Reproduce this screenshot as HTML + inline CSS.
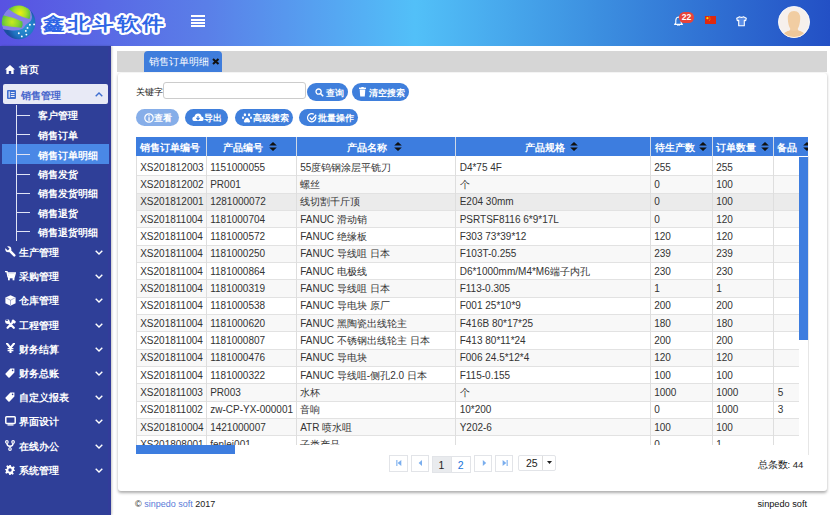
<!DOCTYPE html>
<html><head><meta charset="utf-8">
<style>
*{margin:0;padding:0;box-sizing:border-box}
html,body{width:830px;height:515px;overflow:hidden;background:#fff;font-family:"Liberation Sans",sans-serif;font-size:10px;color:#222}
.abs{position:absolute}
#hdr{position:absolute;left:0;top:0;width:830px;height:46px;background:linear-gradient(90deg,#5852e2 0%,#5a7fe8 25%,#52c0f8 50%,#3c8fe0 72%,#2350c5 100%)}
#side{position:absolute;left:0;top:46px;width:111px;height:469px;background:#2f3f98;box-shadow:1px 0 2px rgba(0,0,0,.22);border-right:3px solid #323c9a}
.mi{position:absolute;left:0;width:111px;height:20px;color:#fff;font-size:10px;line-height:20px;font-weight:bold}
.mi .t{position:absolute;left:19px;top:0}
.mi .ic{position:absolute;left:5px;top:5px;width:10px;height:10px}
.mi .ch{position:absolute;left:95px;top:7px}
.lbl{margin-top:1px;font-size:9.6px;font-weight:bold;color:#fff;line-height:12px;white-space:nowrap}
.sub{position:absolute;left:38px;color:#fff;font-size:10px;font-weight:bold;line-height:19px;height:19px}
#card{position:absolute;left:117.5px;top:73px;width:709px;height:417.5px;background:#fff;border-radius:3px;box-shadow:0 1.5px 3px rgba(0,0,0,.32)}
#tabbar{position:absolute;left:117px;top:51px;width:710px;height:21px;background:#d6d6d6}
#tab{position:absolute;left:144px;top:51px;width:78px;height:21px;background:#3f7ddc;border-radius:4px 4px 0 0;color:#fff;font-size:10px;line-height:21px}
.btn{position:absolute;height:18px;border-radius:9px;background:#3f7fdc;color:#fff;font-size:8.7px;line-height:18px;font-weight:bold;text-align:center}
.cell{font-size:10px;line-height:17.4px;color:#333;white-space:nowrap}
.hcell{font-size:9.5px;line-height:19px;color:#fff;font-weight:bold;white-space:nowrap}
.pb{border:1px solid #e2e4e8;background:#fff}
table{border-collapse:collapse;table-layout:fixed}
#tbl{position:absolute;left:136px;top:137px}
#tbl th{background:#3f7fdc;color:#fff;font-weight:bold;height:19px;font-size:10px;border-right:1px solid #d8e4f6;text-align:center;white-space:nowrap;overflow:hidden}
#tbl td{height:17.5px;font-size:10px;border-right:1px solid #ddd;border-bottom:1px solid #e2e2e2;padding-left:5px;white-space:nowrap;overflow:hidden;color:#222}
</style></head><body>
<div id="hdr">
<svg class="abs" style="left:0;top:0" width="40" height="42" viewBox="0 0 40 42">
<defs>
<radialGradient id="gg1" cx="20" cy="13" r="11" gradientUnits="userSpaceOnUse"><stop offset="0" stop-color="#f0f010"/><stop offset="0.55" stop-color="#a8e028"/><stop offset="1" stop-color="#58c040"/></radialGradient>
<radialGradient id="gg2" cx="12" cy="22" r="11" gradientUnits="userSpaceOnUse"><stop offset="0" stop-color="#c8ea20"/><stop offset="0.6" stop-color="#88d430"/><stop offset="1" stop-color="#50b848"/></radialGradient>
<radialGradient id="bb" cx="24" cy="26" r="17" gradientUnits="userSpaceOnUse"><stop offset="0" stop-color="#2a9ad8"/><stop offset="0.7" stop-color="#1f72c0"/><stop offset="1" stop-color="#1a4fa0"/></radialGradient>
<clipPath id="cc"><circle cx="18.6" cy="22.4" r="16.8"/></clipPath>
</defs>
<circle cx="18.6" cy="22.4" r="16.8" fill="url(#bb)"/>
<g clip-path="url(#cc)">
<path d="M0 4 L24 4 Q31.5 8 32 17 Q31.5 21 29.5 22 Q26 24 23 28.5 Q19 31 12 30.5 Q5 30 0 28.5 Z" fill="#8680e8"/>
<path d="M7.5 8.2 Q12 5 20 5 Q28.5 5.5 30 11.5 Q30.8 17 29.3 19 Q18 16.5 7.5 8.2Z" fill="url(#gg1)"/>
<path d="M1 14.8 Q12 17 22.3 21.5 Q23.5 25 21.5 27.8 Q12 26.8 1 25.2 Z" fill="url(#gg2)"/>
</g>
<g fill="#fff"><circle cx="29.9" cy="24.8" r="0.95"/><circle cx="34.1" cy="24.4" r="0.95"/><circle cx="27.5" cy="27.9" r="0.95"/><circle cx="25.8" cy="30.9" r="0.95"/><circle cx="26.4" cy="34.6" r="0.95"/><circle cx="18.8" cy="33.3" r="0.95"/><circle cx="21.8" cy="36.4" r="0.95"/></g>
</svg>
<div class="abs" style="left:42.5px;top:11px;font-size:18px;line-height:26px;font-weight:700;color:#2f66e6;letter-spacing:2.6px;-webkit-text-stroke:0px #2f66e6;text-shadow:2.00px 0.00px 0 #fff,1.85px 0.77px 0 #fff,1.41px 1.41px 0 #fff,0.77px 1.85px 0 #fff,0.00px 2.00px 0 #fff,-0.77px 1.85px 0 #fff,-1.41px 1.41px 0 #fff,-1.85px 0.77px 0 #fff,-2.00px 0.00px 0 #fff,-1.85px -0.77px 0 #fff,-1.41px -1.41px 0 #fff,-0.77px -1.85px 0 #fff,-0.00px -2.00px 0 #fff,0.77px -1.85px 0 #fff,1.41px -1.41px 0 #fff,1.85px -0.77px 0 #fff,1.11px 0.46px 0 #fff,0.46px 1.11px 0 #fff,-0.46px 1.11px 0 #fff,-1.11px 0.46px 0 #fff,-1.11px -0.46px 0 #fff,-0.46px -1.11px 0 #fff,0.46px -1.11px 0 #fff,1.11px -0.46px 0 #fff;white-space:nowrap;transform:scaleX(1.2);transform-origin:0 0">鑫北斗软件</div>
<div class="abs" style="left:191px;top:15.3px;width:14px;height:1.9px;background:#fff"></div>
<div class="abs" style="left:191px;top:18.7px;width:14px;height:1.9px;background:#fff"></div>
<div class="abs" style="left:191px;top:22px;width:14px;height:1.9px;background:#fff"></div>
<div class="abs" style="left:191px;top:25.2px;width:14px;height:1.9px;background:#fff"></div>
<svg class="abs" style="left:673.5px;top:15.5px" width="9" height="10.5" viewBox="0 0 9 10.5"><path d="M4.5 1 Q1.8 1.3 1.8 4.5 L1.8 7 L0.6 8.4 L8.4 8.4 L7.2 7 L7.2 4.5 Q7.2 1.3 4.5 1Z" stroke="#fff" stroke-width="1.1" fill="none" stroke-linejoin="round"/><path d="M3.3 9.3 Q4.5 10.4 5.7 9.3" stroke="#fff" stroke-width="1" fill="none"/></svg>
<div class="abs" style="left:679px;top:12.2px;width:14.8px;height:10.5px;border-radius:5.2px;background:#e8443a;color:#fff;font-size:8.5px;font-weight:bold;line-height:10.5px;text-align:center">22</div>
<svg class="abs" style="left:704.5px;top:16.4px" width="11.5" height="8" viewBox="0 0 11.5 8"><rect width="11.5" height="8" fill="#de2910"/><circle cx="2.4" cy="2.2" r="1.1" fill="#ffde00"/><circle cx="4.4" cy="0.9" r="0.4" fill="#ffde00"/><circle cx="5" cy="2" r="0.4" fill="#ffde00"/><circle cx="5" cy="3.4" r="0.4" fill="#ffde00"/><circle cx="4.3" cy="4.4" r="0.4" fill="#ffde00"/></svg>
<svg class="abs" style="left:735.5px;top:16px" width="11" height="10.5" viewBox="0 0 11 10.5"><path d="M3.6 0.7 Q5.5 2 7.4 0.7 L10.3 2.2 L9.7 4.6 L8.3 4.3 L8.3 9.8 L2.7 9.8 L2.7 4.3 L1.3 4.6 L0.7 2.2Z" stroke="#fff" stroke-width="1.1" fill="#5b8ee6" stroke-linejoin="round"/></svg>
<svg class="abs" style="left:777.5px;top:6px" width="32" height="32" viewBox="0 0 32 32"><defs><clipPath id="av"><circle cx="16" cy="16" r="15.6"/></clipPath></defs><circle cx="16" cy="16" r="15.6" fill="#f6f0ec"/><g clip-path="url(#av)"><path d="M16 5 Q22.5 5 22.2 13 Q21.8 19.5 19.8 22.5 L20 24.5 Q26 26 30 32 L2 32 Q6 26 12 24.5 L12.2 22.5 Q10.2 19.5 9.8 13 Q9.5 5 16 5Z" fill="#f1cda2"/><path d="M2 32 Q6 25.5 12.5 24.3 Q16 25.5 19.5 24.3 Q26 25.5 30 32Z" fill="#eec89a"/></g><circle cx="16" cy="16" r="15.6" stroke="#fff" stroke-width="0.8" fill="none"/></svg>
</div>
<div id="side">
<svg class="abs" style="left:5px;top:19px" width="10" height="9" viewBox="0 0 10 9"><path d="M5 0 L10 4.6 L8.6 4.6 L8.6 9 L6.2 9 L6.2 6 L3.8 6 L3.8 9 L1.4 9 L1.4 4.6 L0 4.6 Z" fill="#fff"/></svg>
<div class="abs lbl" style="left:19px;top:17px">首页</div>
<div class="abs" style="left:3px;top:38px;width:105px;height:20px;background:#e8eaf6;border-radius:2px"></div>
<svg class="abs" style="left:7px;top:44px" width="9" height="9" viewBox="0 0 9 9"><rect x="0" y="0" width="9" height="9" rx="1" fill="#3f6fd0"/><rect x="1.6" y="1.3" width="1.2" height="6.4" fill="#e8eaf6"/><rect x="3.8" y="2" width="3.8" height="1" fill="#e8eaf6"/><rect x="3.8" y="4" width="3.8" height="1" fill="#e8eaf6"/><rect x="3.8" y="6" width="3.8" height="1" fill="#e8eaf6"/></svg>
<div class="abs lbl" style="left:20.5px;top:43px;color:#4866cc">销售管理</div>
<svg class="abs" style="left:95px;top:46px" width="8" height="5" viewBox="0 0 8 5"><path d="M0.7 4.3 L4 1 L7.3 4.3" stroke="#3f6fd0" stroke-width="1.4" fill="none"/></svg>
<div class="abs" style="left:2px;top:98px;width:107px;height:20px;background:#4a88e6"></div>
<div class="abs" style="left:16px;top:59px;width:1px;height:136px;background:#dfe3f5"></div>
<div class="abs" style="left:16px;top:68.5px;width:14px;height:1px;background:#dfe3f5"></div>
<div class="abs lbl" style="left:38px;top:63px">客户管理</div>
<div class="abs" style="left:16px;top:88.1px;width:14px;height:1px;background:#dfe3f5"></div>
<div class="abs lbl" style="left:38px;top:82.6px">销售订单</div>
<div class="abs" style="left:16px;top:108.0px;width:14px;height:1px;background:#dfe3f5"></div>
<div class="abs lbl" style="left:38px;top:102.5px">销售订单明细</div>
<div class="abs" style="left:16px;top:127.69999999999999px;width:14px;height:1px;background:#dfe3f5"></div>
<div class="abs lbl" style="left:38px;top:122.19999999999999px">销售发货</div>
<div class="abs" style="left:16px;top:146.5px;width:14px;height:1px;background:#dfe3f5"></div>
<div class="abs lbl" style="left:38px;top:141px">销售发货明细</div>
<div class="abs" style="left:16px;top:166.0px;width:14px;height:1px;background:#dfe3f5"></div>
<div class="abs lbl" style="left:38px;top:160.5px">销售退货</div>
<div class="abs" style="left:16px;top:185.3px;width:14px;height:1px;background:#dfe3f5"></div>
<div class="abs lbl" style="left:38px;top:179.8px">销售退货明细</div>
<div class="abs lbl" style="left:19px;top:200.0px">生产管理</div>
<svg class="abs" style="left:95px;top:204.0px" width="8" height="5" viewBox="0 0 8 5"><path d="M0.7 0.7 L4 4 L7.3 0.7" stroke="#fff" stroke-width="1.4" fill="none"/></svg>
<div class="abs" style="left:5px;top:199.8px;line-height:0"><svg width="11" height="11" viewBox="0 0 11 11"><path d="M4 4 L9.3 9.3" stroke="#fff" stroke-width="2.5" stroke-linecap="round"/><circle cx="3.3" cy="3.3" r="3" fill="#fff"/><path d="M1.2 -0.6 L4.6 2.8 L2.8 4.6 L-0.6 1.2Z" fill="#2f3f98"/></svg></div>
<div class="abs lbl" style="left:19px;top:224.2px">采购管理</div>
<svg class="abs" style="left:95px;top:228.2px" width="8" height="5" viewBox="0 0 8 5"><path d="M0.7 0.7 L4 4 L7.3 0.7" stroke="#fff" stroke-width="1.4" fill="none"/></svg>
<div class="abs" style="left:5px;top:224.6px;line-height:0"><svg width="11" height="10" viewBox="0 0 11 10"><path d="M0 0.5 L2 0.5 L3 5.8 L9.2 5.8 L10.3 2 L2.6 2" stroke="#fff" stroke-width="1.4" fill="none"/><path d="M3 2.6 L9.8 2.6 L8.9 5.2 L3.4 5.2Z" fill="#fff"/><rect x="3" y="6" width="6.5" height="1.3" fill="#fff"/><rect x="3" y="7" width="1.8" height="2.3" fill="#fff"/><rect x="7.6" y="7" width="1.8" height="2.3" fill="#fff"/></svg></div>
<div class="abs lbl" style="left:19px;top:248.4px">仓库管理</div>
<svg class="abs" style="left:95px;top:252.4px" width="8" height="5" viewBox="0 0 8 5"><path d="M0.7 0.7 L4 4 L7.3 0.7" stroke="#fff" stroke-width="1.4" fill="none"/></svg>
<div class="abs" style="left:5px;top:249.0px;line-height:0"><svg width="11" height="11" viewBox="0 0 11 11"><path d="M5.5 0.3 L10.6 2.6 L10.6 8.3 L5.5 10.7 L0.4 8.3 L0.4 2.6Z" fill="#fff"/><path d="M1.2 3 L5.5 5.2 L9.8 3 M5.5 5.2 L5.5 10" stroke="#2f3f98" stroke-width="0.7" fill="none" opacity=".6"/></svg></div>
<div class="abs lbl" style="left:19px;top:272.6px">工程管理</div>
<svg class="abs" style="left:95px;top:276.6px" width="8" height="5" viewBox="0 0 8 5"><path d="M0.7 0.7 L4 4 L7.3 0.7" stroke="#fff" stroke-width="1.4" fill="none"/></svg>
<div class="abs" style="left:5px;top:273.0px;line-height:0"><svg width="11" height="10" viewBox="0 0 11 10"><path d="M2.6 2.6 L8.8 8.8 M8.6 2.4 L2.6 8.8" stroke="#fff" stroke-width="2.2" stroke-linecap="round"/><circle cx="2.4" cy="2.6" r="2.3" fill="#fff"/><circle cx="2" cy="1.2" r="0.9" fill="#2f3f98"/><rect x="6.6" y="1.2" width="4.2" height="2.6" transform="rotate(40 8.7 2.5)" fill="#fff"/></svg></div>
<div class="abs lbl" style="left:19px;top:296.8px">财务结算</div>
<svg class="abs" style="left:95px;top:300.8px" width="8" height="5" viewBox="0 0 8 5"><path d="M0.7 0.7 L4 4 L7.3 0.7" stroke="#fff" stroke-width="1.4" fill="none"/></svg>
<div class="abs" style="left:6px;top:297.0px;line-height:0"><svg width="9" height="10" viewBox="0 0 9 10"><path d="M1 0.5 L4.5 4.8 L8 0.5" stroke="#fff" stroke-width="2.1" fill="none" stroke-linecap="square"/><path d="M4.5 4.5 L4.5 10" stroke="#fff" stroke-width="2"/><path d="M1.6 5.6 L7.4 5.6 M1.6 7.6 L7.4 7.6" stroke="#fff" stroke-width="1.2"/></svg></div>
<div class="abs lbl" style="left:19px;top:321.0px">财务总账</div>
<svg class="abs" style="left:95px;top:325.0px" width="8" height="5" viewBox="0 0 8 5"><path d="M0.7 0.7 L4 4 L7.3 0.7" stroke="#fff" stroke-width="1.4" fill="none"/></svg>
<div class="abs" style="left:5px;top:321.5px;line-height:0"><svg width="10" height="10" viewBox="0 0 10 10"><path d="M0.6 5.4 L5.4 0.6 L9.4 0.6 L9.4 4.6 L4.6 9.4 Q4 10 3.4 9.4 L0.6 6.6 Q0 6 0.6 5.4Z" fill="#fff"/><circle cx="7.6" cy="2.4" r="0.8" fill="#2f3f98"/></svg></div>
<div class="abs lbl" style="left:19px;top:345.2px">自定义报表</div>
<svg class="abs" style="left:95px;top:349.2px" width="8" height="5" viewBox="0 0 8 5"><path d="M0.7 0.7 L4 4 L7.3 0.7" stroke="#fff" stroke-width="1.4" fill="none"/></svg>
<div class="abs" style="left:5px;top:346.0px;line-height:0"><svg width="10" height="10" viewBox="0 0 10 10"><path d="M0.6 5.4 L5.4 0.6 L9.4 0.6 L9.4 4.6 L4.6 9.4 Q4 10 3.4 9.4 L0.6 6.6 Q0 6 0.6 5.4Z" fill="#fff"/><circle cx="7.6" cy="2.4" r="0.8" fill="#2f3f98"/></svg></div>
<div class="abs lbl" style="left:19px;top:369.4px">界面设计</div>
<svg class="abs" style="left:95px;top:373.4px" width="8" height="5" viewBox="0 0 8 5"><path d="M0.7 0.7 L4 4 L7.3 0.7" stroke="#fff" stroke-width="1.4" fill="none"/></svg>
<div class="abs" style="left:5px;top:370.3px;line-height:0"><svg width="11" height="10" viewBox="0 0 11 10"><rect x="0.8" y="0.8" width="9.4" height="6.6" rx="0.8" stroke="#fff" stroke-width="1.5" fill="none"/><rect x="2.5" y="8.3" width="6" height="1.3" fill="#fff"/></svg></div>
<div class="abs lbl" style="left:19px;top:393.6px">在线办公</div>
<svg class="abs" style="left:95px;top:397.6px" width="8" height="5" viewBox="0 0 8 5"><path d="M0.7 0.7 L4 4 L7.3 0.7" stroke="#fff" stroke-width="1.4" fill="none"/></svg>
<div class="abs" style="left:5px;top:393.8px;line-height:0"><svg width="10" height="11" viewBox="0 0 10 11"><circle cx="1.9" cy="1.9" r="1.3" stroke="#fff" stroke-width="1.1" fill="none"/><circle cx="8.1" cy="1.9" r="1.3" stroke="#fff" stroke-width="1.1" fill="none"/><circle cx="5" cy="9.1" r="1.3" stroke="#fff" stroke-width="1.1" fill="none"/><path d="M1.9 3.2 Q1.9 6 5 6.3 Q8.1 6 8.1 3.2 M5 6.3 L5 7.8" stroke="#fff" stroke-width="1.4" fill="none"/></svg></div>
<div class="abs lbl" style="left:19px;top:417.8px">系统管理</div>
<svg class="abs" style="left:95px;top:421.8px" width="8" height="5" viewBox="0 0 8 5"><path d="M0.7 0.7 L4 4 L7.3 0.7" stroke="#fff" stroke-width="1.4" fill="none"/></svg>
<div class="abs" style="left:5px;top:419.0px;line-height:0"><svg width="10" height="10" viewBox="0 0 10 10"><path d="M4.2 0 L5.8 0 L6.1 1.6 L7.3 2.1 L8.7 1.2 L9 1.5 L9.8 2.3 L8.9 3.7 L9.4 4.9 L10 5 L10 5.8 L8.4 6.1 L7.9 7.3 L8.8 8.7 L7.7 9.8 L6.3 8.9 L5.8 9.1 L5.8 10 L4.2 10 L3.9 8.4 L2.7 7.9 L1.3 8.8 L0.2 7.7 L1.1 6.3 L0.6 5.1 L0 5 L0 4.2 L1.6 3.9 L2.1 2.7 L1.2 1.3 L2.3 0.2 L3.7 1.1 L4.2 0.9 Z" fill="#fff"/><circle cx="5" cy="5" r="1.7" fill="#2f3f98"/></svg></div>
</div>
<div id="card"></div>
<div id="tabbar"></div>
<div id="tab"><span class="abs" style="left:5px;top:0;font-size:9.6px">销售订单明细</span><svg class="abs" style="left:68px;top:7px" width="7.5" height="7" viewBox="0 0 7.5 7"><path d="M1 1 L6.5 6 M6.5 1 L1 6" stroke="#111" stroke-width="2.1"/></svg></div>
<div class="abs" style="left:135.5px;top:86px;font-size:9px;line-height:12px;color:#222">关键字</div>
<div class="abs" style="left:162.5px;top:81.5px;width:143px;height:17px;border:1px solid #ccc;border-radius:3px;background:#fff"></div>
<div class="btn" style="left:306.5px;top:83.2px;width:41px;height:18px">
<svg class="abs" style="left:8.2px;top:4.5px" width="9" height="9" viewBox="0 0 9 9"><circle cx="3.6" cy="3.6" r="2.6" stroke="#fff" stroke-width="1.3" fill="none"/><path d="M5.5 5.5 L8.2 8.2" stroke="#fff" stroke-width="1.6"/></svg><span class="abs" style="left:19px;top:0.5px">查询</span></div>
<div class="btn" style="left:351.7px;top:83.2px;width:57.3px;height:18px">
<svg class="abs" style="left:7.5px;top:3.5px" width="7" height="10" viewBox="0 0 7 10"><rect x="0" y="0.6" width="7" height="1.4" fill="#fff"/><rect x="2.3" y="0" width="2.4" height="1" fill="#fff"/><path d="M0.7 2.6 L6.3 2.6 L5.8 9.6 L1.2 9.6Z" fill="#fff"/></svg><span class="abs" style="left:17px;top:0.5px">清空搜索</span></div>
<div class="btn" style="left:135.5px;top:108.5px;width:43px;height:17.5px;background:#86aee9">
<svg class="abs" style="left:8.2px;top:4px" width="10" height="10" viewBox="0 0 10 10"><circle cx="5" cy="5" r="4.2" stroke="#fff" stroke-width="1.2" fill="none"/><rect x="4.4" y="4.2" width="1.3" height="3.6" fill="#fff"/><circle cx="5" cy="2.8" r="0.75" fill="#fff"/></svg><span class="abs" style="left:18.8px;top:0.5px">查看</span></div>
<div class="btn" style="left:184.5px;top:108.5px;width:43.5px;height:17.5px">
<svg class="abs" style="left:7px;top:4.2px" width="12" height="8.6" viewBox="0 0 11 8"><path d="M2.6 7.6 Q0.2 7.6 0.2 5.4 Q0.2 3.4 2.3 3.2 Q2.8 0.4 5.6 0.4 Q8.4 0.4 8.8 3.2 Q10.8 3.5 10.8 5.5 Q10.8 7.6 8.5 7.6Z" fill="#fff"/><path d="M5.5 2.8 L5.5 6 M4 4.6 L5.5 6.2 L7 4.6" stroke="#3f7fdc" stroke-width="1.1" fill="none"/></svg><span class="abs" style="left:19.5px;top:0.5px">导出</span></div>
<div class="btn" style="left:234.5px;top:108.5px;width:58.5px;height:17.5px">
<svg class="abs" style="left:7.2px;top:4px" width="10" height="10" viewBox="0 0 10 10"><ellipse cx="2.9" cy="1.8" rx="1.2" ry="1.5" fill="#fff"/><ellipse cx="7.1" cy="1.8" rx="1.2" ry="1.5" fill="#fff"/><ellipse cx="1" cy="4.8" rx="1" ry="1.3" fill="#fff"/><ellipse cx="9" cy="4.8" rx="1" ry="1.3" fill="#fff"/><path d="M5 4.6 Q7.6 5.6 8.2 8.4 Q8 9.8 6.3 9.4 Q5 9 3.7 9.4 Q2 9.8 1.8 8.4 Q2.4 5.6 5 4.6Z" fill="#fff"/></svg><span class="abs" style="left:18.8px;top:0.5px">高级搜索</span></div>
<div class="btn" style="left:298.5px;top:108.5px;width:59px;height:17.5px">
<svg class="abs" style="left:8.5px;top:4px" width="10" height="10" viewBox="0 0 10 10"><path d="M8.6 3.6 A4.1 4.1 0 1 1 6.8 1.2" stroke="#fff" stroke-width="1.2" fill="none"/><path d="M2.8 4.6 L4.8 6.6 L9.2 1.8" stroke="#fff" stroke-width="1.4" fill="none"/></svg><span class="abs" style="left:19.5px;top:0.5px">批量操作</span></div>
<!--TBL-->
<div class="abs" style="left:136px;top:137px;width:672px;height:308px;overflow:hidden">
<div class="abs" style="left:0;top:22.07px;width:663px;height:16.33px;background:#fff"></div>
<div class="abs" style="left:0;top:38.40px;width:663px;height:1px;background:#e2e2e2"></div>
<div class="abs cell" style="left:4.2px;top:21.57px">XS201812003</div>
<div class="abs cell" style="left:74.2px;top:21.57px">1151000055</div>
<div class="abs cell" style="left:164.2px;top:21.57px">55度钨钢涂层平铣刀</div>
<div class="abs cell" style="left:323.7px;top:21.57px">D4*75 4F</div>
<div class="abs cell" style="left:518.2px;top:21.57px">255</div>
<div class="abs cell" style="left:580.2px;top:21.57px">255</div>
<div class="abs" style="left:0;top:39.40px;width:663px;height:16.33px;background:#f8f8f8"></div>
<div class="abs" style="left:0;top:55.73px;width:663px;height:1px;background:#e2e2e2"></div>
<div class="abs cell" style="left:4.2px;top:38.90px">XS201812002</div>
<div class="abs cell" style="left:74.2px;top:38.90px">PR001</div>
<div class="abs cell" style="left:164.2px;top:38.90px">螺丝</div>
<div class="abs cell" style="left:323.7px;top:38.90px">个</div>
<div class="abs cell" style="left:518.2px;top:38.90px">0</div>
<div class="abs cell" style="left:580.2px;top:38.90px">100</div>
<div class="abs" style="left:0;top:56.73px;width:663px;height:16.33px;background:#ebebeb"></div>
<div class="abs" style="left:0;top:73.06px;width:663px;height:1px;background:#e2e2e2"></div>
<div class="abs cell" style="left:4.2px;top:56.23px">XS201812001</div>
<div class="abs cell" style="left:74.2px;top:56.23px">1281000072</div>
<div class="abs cell" style="left:164.2px;top:56.23px">线切割千斤顶</div>
<div class="abs cell" style="left:323.7px;top:56.23px">E204 30mm</div>
<div class="abs cell" style="left:518.2px;top:56.23px">0</div>
<div class="abs cell" style="left:580.2px;top:56.23px">100</div>
<div class="abs" style="left:0;top:74.06px;width:663px;height:16.33px;background:#f8f8f8"></div>
<div class="abs" style="left:0;top:90.39px;width:663px;height:1px;background:#e2e2e2"></div>
<div class="abs cell" style="left:4.2px;top:73.56px">XS201811004</div>
<div class="abs cell" style="left:74.2px;top:73.56px">1181000704</div>
<div class="abs cell" style="left:164.2px;top:73.56px">FANUC 滑动销</div>
<div class="abs cell" style="left:323.7px;top:73.56px">PSRTSF8116 6*9*17L</div>
<div class="abs cell" style="left:518.2px;top:73.56px">0</div>
<div class="abs cell" style="left:580.2px;top:73.56px">120</div>
<div class="abs" style="left:0;top:91.39px;width:663px;height:16.33px;background:#fff"></div>
<div class="abs" style="left:0;top:107.72px;width:663px;height:1px;background:#e2e2e2"></div>
<div class="abs cell" style="left:4.2px;top:90.89px">XS201811004</div>
<div class="abs cell" style="left:74.2px;top:90.89px">1181000572</div>
<div class="abs cell" style="left:164.2px;top:90.89px">FANUC 绝缘板</div>
<div class="abs cell" style="left:323.7px;top:90.89px">F303 73*39*12</div>
<div class="abs cell" style="left:518.2px;top:90.89px">120</div>
<div class="abs cell" style="left:580.2px;top:90.89px">120</div>
<div class="abs" style="left:0;top:108.72px;width:663px;height:16.33px;background:#f8f8f8"></div>
<div class="abs" style="left:0;top:125.05px;width:663px;height:1px;background:#e2e2e2"></div>
<div class="abs cell" style="left:4.2px;top:108.22px">XS201811004</div>
<div class="abs cell" style="left:74.2px;top:108.22px">1181000250</div>
<div class="abs cell" style="left:164.2px;top:108.22px">FANUC 导线咀 日本</div>
<div class="abs cell" style="left:323.7px;top:108.22px">F103T-0.255</div>
<div class="abs cell" style="left:518.2px;top:108.22px">239</div>
<div class="abs cell" style="left:580.2px;top:108.22px">239</div>
<div class="abs" style="left:0;top:126.05px;width:663px;height:16.33px;background:#fff"></div>
<div class="abs" style="left:0;top:142.38px;width:663px;height:1px;background:#e2e2e2"></div>
<div class="abs cell" style="left:4.2px;top:125.55px">XS201811004</div>
<div class="abs cell" style="left:74.2px;top:125.55px">1181000864</div>
<div class="abs cell" style="left:164.2px;top:125.55px">FANUC 电极线</div>
<div class="abs cell" style="left:323.7px;top:125.55px">D6*1000mm/M4*M6端子内孔</div>
<div class="abs cell" style="left:518.2px;top:125.55px">230</div>
<div class="abs cell" style="left:580.2px;top:125.55px">230</div>
<div class="abs" style="left:0;top:143.38px;width:663px;height:16.33px;background:#f8f8f8"></div>
<div class="abs" style="left:0;top:159.71px;width:663px;height:1px;background:#e2e2e2"></div>
<div class="abs cell" style="left:4.2px;top:142.88px">XS201811004</div>
<div class="abs cell" style="left:74.2px;top:142.88px">1181000319</div>
<div class="abs cell" style="left:164.2px;top:142.88px">FANUC 导线咀 日本</div>
<div class="abs cell" style="left:323.7px;top:142.88px">F113-0.305</div>
<div class="abs cell" style="left:518.2px;top:142.88px">1</div>
<div class="abs cell" style="left:580.2px;top:142.88px">1</div>
<div class="abs" style="left:0;top:160.71px;width:663px;height:16.33px;background:#fff"></div>
<div class="abs" style="left:0;top:177.04px;width:663px;height:1px;background:#e2e2e2"></div>
<div class="abs cell" style="left:4.2px;top:160.21px">XS201811004</div>
<div class="abs cell" style="left:74.2px;top:160.21px">1181000538</div>
<div class="abs cell" style="left:164.2px;top:160.21px">FANUC 导电块 原厂</div>
<div class="abs cell" style="left:323.7px;top:160.21px">F001 25*10*9</div>
<div class="abs cell" style="left:518.2px;top:160.21px">200</div>
<div class="abs cell" style="left:580.2px;top:160.21px">200</div>
<div class="abs" style="left:0;top:178.04px;width:663px;height:16.33px;background:#f8f8f8"></div>
<div class="abs" style="left:0;top:194.37px;width:663px;height:1px;background:#e2e2e2"></div>
<div class="abs cell" style="left:4.2px;top:177.54px">XS201811004</div>
<div class="abs cell" style="left:74.2px;top:177.54px">1181000620</div>
<div class="abs cell" style="left:164.2px;top:177.54px">FANUC 黑陶瓷出线轮主</div>
<div class="abs cell" style="left:323.7px;top:177.54px">F416B 80*17*25</div>
<div class="abs cell" style="left:518.2px;top:177.54px">180</div>
<div class="abs cell" style="left:580.2px;top:177.54px">180</div>
<div class="abs" style="left:0;top:195.37px;width:663px;height:16.33px;background:#fff"></div>
<div class="abs" style="left:0;top:211.70px;width:663px;height:1px;background:#e2e2e2"></div>
<div class="abs cell" style="left:4.2px;top:194.87px">XS201811004</div>
<div class="abs cell" style="left:74.2px;top:194.87px">1181000807</div>
<div class="abs cell" style="left:164.2px;top:194.87px">FANUC 不锈钢出线轮主 日本</div>
<div class="abs cell" style="left:323.7px;top:194.87px">F413 80*11*24</div>
<div class="abs cell" style="left:518.2px;top:194.87px">200</div>
<div class="abs cell" style="left:580.2px;top:194.87px">200</div>
<div class="abs" style="left:0;top:212.70px;width:663px;height:16.33px;background:#f8f8f8"></div>
<div class="abs" style="left:0;top:229.03px;width:663px;height:1px;background:#e2e2e2"></div>
<div class="abs cell" style="left:4.2px;top:212.20px">XS201811004</div>
<div class="abs cell" style="left:74.2px;top:212.20px">1181000476</div>
<div class="abs cell" style="left:164.2px;top:212.20px">FANUC 导电块</div>
<div class="abs cell" style="left:323.7px;top:212.20px">F006 24.5*12*4</div>
<div class="abs cell" style="left:518.2px;top:212.20px">120</div>
<div class="abs cell" style="left:580.2px;top:212.20px">120</div>
<div class="abs" style="left:0;top:230.03px;width:663px;height:16.33px;background:#fff"></div>
<div class="abs" style="left:0;top:246.36px;width:663px;height:1px;background:#e2e2e2"></div>
<div class="abs cell" style="left:4.2px;top:229.53px">XS201811004</div>
<div class="abs cell" style="left:74.2px;top:229.53px">1181000322</div>
<div class="abs cell" style="left:164.2px;top:229.53px">FANUC 导线咀-侧孔2.0 日本</div>
<div class="abs cell" style="left:323.7px;top:229.53px">F115-0.155</div>
<div class="abs cell" style="left:518.2px;top:229.53px">100</div>
<div class="abs cell" style="left:580.2px;top:229.53px">100</div>
<div class="abs" style="left:0;top:247.36px;width:663px;height:16.33px;background:#f8f8f8"></div>
<div class="abs" style="left:0;top:263.69px;width:663px;height:1px;background:#e2e2e2"></div>
<div class="abs cell" style="left:4.2px;top:246.86px">XS201811003</div>
<div class="abs cell" style="left:74.2px;top:246.86px">PR003</div>
<div class="abs cell" style="left:164.2px;top:246.86px">水杯</div>
<div class="abs cell" style="left:323.7px;top:246.86px">个</div>
<div class="abs cell" style="left:518.2px;top:246.86px">1000</div>
<div class="abs cell" style="left:580.2px;top:246.86px">1000</div>
<div class="abs cell" style="left:641.7px;top:246.86px">5</div>
<div class="abs" style="left:0;top:264.69px;width:663px;height:16.33px;background:#fff"></div>
<div class="abs" style="left:0;top:281.02px;width:663px;height:1px;background:#e2e2e2"></div>
<div class="abs cell" style="left:4.2px;top:264.19px">XS201811002</div>
<div class="abs cell" style="left:74.2px;top:264.19px">zw-CP-YX-000001</div>
<div class="abs cell" style="left:164.2px;top:264.19px">音响</div>
<div class="abs cell" style="left:323.7px;top:264.19px">10*200</div>
<div class="abs cell" style="left:518.2px;top:264.19px">0</div>
<div class="abs cell" style="left:580.2px;top:264.19px">1000</div>
<div class="abs cell" style="left:641.7px;top:264.19px">3</div>
<div class="abs" style="left:0;top:282.02px;width:663px;height:16.33px;background:#f8f8f8"></div>
<div class="abs" style="left:0;top:298.35px;width:663px;height:1px;background:#e2e2e2"></div>
<div class="abs cell" style="left:4.2px;top:281.52px">XS201810004</div>
<div class="abs cell" style="left:74.2px;top:281.52px">1421000007</div>
<div class="abs cell" style="left:164.2px;top:281.52px">ATR 喷水咀</div>
<div class="abs cell" style="left:323.7px;top:281.52px">Y202-6</div>
<div class="abs cell" style="left:518.2px;top:281.52px">100</div>
<div class="abs cell" style="left:580.2px;top:281.52px">100</div>
<div class="abs" style="left:0;top:299.35px;width:663px;height:16.33px;background:#fff"></div>
<div class="abs" style="left:0;top:315.68px;width:663px;height:1px;background:#e2e2e2"></div>
<div class="abs cell" style="left:4.2px;top:298.85px">XS201808001</div>
<div class="abs cell" style="left:74.2px;top:298.85px">fenlei001</div>
<div class="abs cell" style="left:164.2px;top:298.85px">子类产品</div>
<div class="abs cell" style="left:518.2px;top:298.85px">0</div>
<div class="abs cell" style="left:580.2px;top:298.85px">1</div>
<div class="abs" style="left:0.0px;top:19px;width:1px;height:289px;background:#dedede"></div>
<div class="abs" style="left:69.5px;top:19px;width:1px;height:289px;background:#dedede"></div>
<div class="abs" style="left:159.5px;top:19px;width:1px;height:289px;background:#dedede"></div>
<div class="abs" style="left:319.0px;top:19px;width:1px;height:289px;background:#dedede"></div>
<div class="abs" style="left:513.5px;top:19px;width:1px;height:289px;background:#dedede"></div>
<div class="abs" style="left:575.5px;top:19px;width:1px;height:289px;background:#dedede"></div>
<div class="abs" style="left:637.0px;top:19px;width:1px;height:289px;background:#dedede"></div>
<div class="abs" style="left:0;top:0;width:672px;height:19px;background:#3d7ddf"></div>
<div class="abs hcell" style="left:4.2px;top:0.8px">销售订单编号</div>
<div class="abs" style="left:69.5px;top:0;width:1px;height:19px;background:#cfd9e6"></div>
<div class="abs hcell" style="left:86.9px;top:0.8px">产品编号</div>
<div class="abs" style="left:132.7px;top:5.2px;line-height:0"><svg width="8" height="9" viewBox="0 0 8 9"><path d="M4 0 L7.8 3.6 L0.2 3.6Z M4 9 L7.8 5.4 L0.2 5.4Z" fill="#111"/></svg></div>
<div class="abs" style="left:159.5px;top:0;width:1px;height:19px;background:#cfd9e6"></div>
<div class="abs hcell" style="left:211.2px;top:0.8px">产品名称</div>
<div class="abs" style="left:257.6px;top:5.2px;line-height:0"><svg width="8" height="9" viewBox="0 0 8 9"><path d="M4 0 L7.8 3.6 L0.2 3.6Z M4 9 L7.8 5.4 L0.2 5.4Z" fill="#111"/></svg></div>
<div class="abs" style="left:319.0px;top:0;width:1px;height:19px;background:#cfd9e6"></div>
<div class="abs hcell" style="left:388.6px;top:0.8px">产品规格</div>
<div class="abs" style="left:434.4px;top:5.2px;line-height:0"><svg width="8" height="9" viewBox="0 0 8 9"><path d="M4 0 L7.8 3.6 L0.2 3.6Z M4 9 L7.8 5.4 L0.2 5.4Z" fill="#111"/></svg></div>
<div class="abs" style="left:513.5px;top:0;width:1px;height:19px;background:#cfd9e6"></div>
<div class="abs hcell" style="left:518.7px;top:0.8px">待生产数</div>
<div class="abs" style="left:562.6px;top:5.2px;line-height:0"><svg width="8" height="9" viewBox="0 0 8 9"><path d="M4 0 L7.8 3.6 L0.2 3.6Z M4 9 L7.8 5.4 L0.2 5.4Z" fill="#111"/></svg></div>
<div class="abs" style="left:575.5px;top:0;width:1px;height:19px;background:#cfd9e6"></div>
<div class="abs hcell" style="left:579.6px;top:0.8px">订单数量</div>
<div class="abs" style="left:625.4px;top:5.2px;line-height:0"><svg width="8" height="9" viewBox="0 0 8 9"><path d="M4 0 L7.8 3.6 L0.2 3.6Z M4 9 L7.8 5.4 L0.2 5.4Z" fill="#111"/></svg></div>
<div class="abs" style="left:637.0px;top:0;width:1px;height:19px;background:#cfd9e6"></div>
<div class="abs hcell" style="left:641.4px;top:0.8px">备品</div>
<div class="abs" style="left:666.6px;top:5.2px;line-height:0"><svg width="8" height="9" viewBox="0 0 8 9"><path d="M4 0 L7.8 3.6 L0.2 3.6Z M4 9 L7.8 5.4 L0.2 5.4Z" fill="#111"/></svg></div>
</div>
<div class="abs" style="left:799px;top:157px;width:9.3px;height:183px;background:#3d7ddf"></div>
<div class="abs" style="left:807.5px;top:156px;width:1px;height:299px;background:#e6e6e6"></div>
<div class="abs" style="left:135.5px;top:445px;width:99px;height:9.3px;background:#3d7ddf"></div>
<!--/TBL-->
<div class="abs pb" style="left:389px;top:455px;width:18.5px;height:16.5px"><svg class="abs" style="left:6px;top:4.2px" width="6" height="6" viewBox="0 0 6 6"><rect x="0.3" y="0" width="1.1" height="6" fill="#7aaeee"/><path d="M5.3 0 L1.6 3 L5.3 6Z" fill="#7aaeee"/></svg></div>
<div class="abs pb" style="left:410.5px;top:455px;width:18px;height:16.5px"><svg class="abs" style="left:6.5px;top:4.2px" width="5" height="6" viewBox="0 0 5 6"><path d="M4 0 L0.6 3 L4 6Z" fill="#7aaeee"/></svg></div>
<div class="abs pb" style="left:431.5px;top:455.5px;width:20px;height:17px;background:#e9ebee;color:#222;font-size:10.5px;line-height:17px;text-align:center">1</div>
<div class="abs pb" style="left:451px;top:455.5px;width:19.5px;height:17px;color:#1a73d9;font-size:10.5px;line-height:17px;text-align:center">2</div>
<div class="abs pb" style="left:474px;top:455px;width:18px;height:16.5px"><svg class="abs" style="left:7px;top:4.2px" width="5" height="6" viewBox="0 0 5 6"><path d="M0.8 0 L4.2 3 L0.8 6Z" fill="#7aaeee"/></svg></div>
<div class="abs pb" style="left:494.5px;top:455px;width:18.5px;height:16.5px"><svg class="abs" style="left:6.5px;top:4.2px" width="6" height="6" viewBox="0 0 6 6"><path d="M0.6 0 L4.3 3 L0.6 6Z" fill="#7aaeee"/><rect x="4.6" y="0" width="1.1" height="6" fill="#7aaeee"/></svg></div>
<div class="abs pb" style="left:517.5px;top:455px;width:38.5px;height:15.5px;border-radius:2px"><span class="abs" style="left:7.5px;top:0;font-size:10.5px;line-height:14.5px;color:#222">25</span><div class="abs" style="left:23.5px;top:0;width:1px;height:13.5px;background:#ddd"></div><svg class="abs" style="left:28.5px;top:5px" width="5" height="3" viewBox="0 0 5 3"><path d="M0 0 L5 0 L2.5 3Z" fill="#222"/></svg></div>
<div class="abs" style="left:757.5px;top:458.5px;font-size:9.5px;line-height:12px;color:#222;white-space:nowrap">总条数: 44</div>
<div class="abs" style="left:135px;top:497.5px;font-size:9px;line-height:12px;color:#222;white-space:nowrap">© <span style="color:#5b7bd8">sinpedo soft</span> 2017</div>
<div class="abs" style="left:757.5px;top:497.5px;font-size:9.2px;line-height:12px;color:#111;white-space:nowrap">sinpedo soft</div>
</body></html>
